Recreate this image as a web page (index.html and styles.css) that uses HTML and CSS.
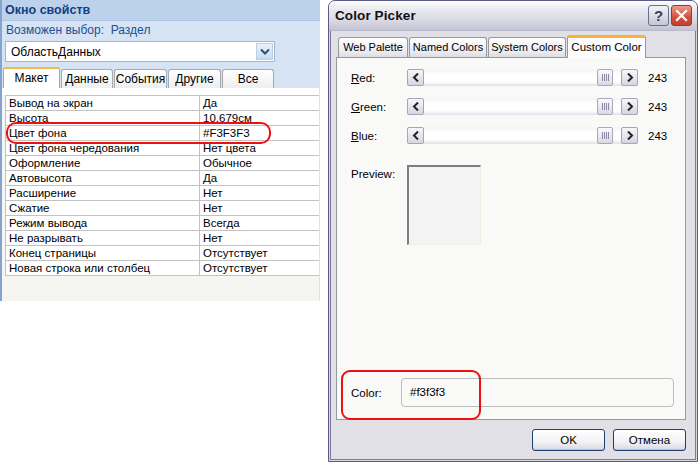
FILE: index.html
```html
<!DOCTYPE html>
<html>
<head>
<meta charset="utf-8">
<link rel="stylesheet" href="styles.css">
</head>
<body>
<div class="page">
  <div class="props">
    <div class="props-title">Окно свойств</div>
    <div class="props-sel">Возможен выбор:&nbsp; Раздел</div>
    <div class="combo">
      <span class="combo-text">ОбластьДанных</span>
      <span class="combo-btn"><svg width="10" height="7" viewBox="0 0 10 7"><path d="M1 1.5 L5 5.5 L9 1.5" fill="none" stroke="#2d4f80" stroke-width="2"/></svg></span>
    </div>
    <div class="ptabs">
      <div class="ptab active">Макет</div>
      <div class="ptab w51">Данные</div>
      <div class="ptab w53">События</div>
      <div class="ptab w53">Другие</div>
      <div class="ptab w51">Все</div>
    </div>
    <div class="grid-area">
      <div class="grid">
        <div class="row"><span class="k">Вывод на экран</span><span class="v">Да</span></div>
        <div class="row"><span class="k">Высота</span><span class="v">10,679см</span></div>
        <div class="row"><span class="k">Цвет фона</span><span class="v">#F3F3F3</span></div>
        <div class="row"><span class="k">Цвет фона чередования</span><span class="v">Нет цвета</span></div>
        <div class="row"><span class="k">Оформление</span><span class="v">Обычное</span></div>
        <div class="row"><span class="k">Автовысота</span><span class="v">Да</span></div>
        <div class="row"><span class="k">Расширение</span><span class="v">Нет</span></div>
        <div class="row"><span class="k">Сжатие</span><span class="v">Нет</span></div>
        <div class="row"><span class="k">Режим вывода</span><span class="v">Всегда</span></div>
        <div class="row"><span class="k">Не разрывать</span><span class="v">Нет</span></div>
        <div class="row"><span class="k">Конец страницы</span><span class="v">Отсутствует</span></div>
        <div class="row"><span class="k">Новая строка или столбец</span><span class="v">Отсутствует</span></div>
      </div>
      <div class="hl hl-left"></div>
    </div>
  </div>

  <div class="dialog">
    <div class="titlebar">
      <span class="title">Color Picker</span>
      <span class="tb-btns">
        <span class="tbtn help">?</span>
        <span class="tbtn close"><svg width="13" height="13" viewBox="0 0 13 13"><path d="M2 2 L11 11 M11 2 L2 11" stroke="#fff" stroke-width="2.2" stroke-linecap="square"/></svg></span>
      </span>
    </div>
    <div class="dbody">
      <div class="tabs">
        <div class="tab t1">Web Palette</div>
        <div class="tab t2">Named Colors</div>
        <div class="tab t3">System Colors</div>
        <div class="tab t4 active">Custom Color</div>
      </div>
      <div class="panel">
        <div class="sliders">
          <div class="srow">
            <span class="slabel"><u>R</u>ed:</span>
            <div class="track">
              <span class="sbtn"><svg width="8" height="9" viewBox="0 0 8 9"><path d="M6 0.5 L2 4.5 L6 8.5" fill="none" stroke="#222" stroke-width="2"/></svg></span>
              <span class="trackfill"></span>
              <span class="thumb"><i></i><i></i><i></i><i></i></span>
              <span class="gap"></span>
              <span class="sbtn"><svg width="8" height="9" viewBox="0 0 8 9"><path d="M2 0.5 L6 4.5 L2 8.5" fill="none" stroke="#222" stroke-width="2"/></svg></span>
            </div>
            <span class="sval">243</span>
          </div>
          <div class="srow">
            <span class="slabel"><u>G</u>reen:</span>
            <div class="track">
              <span class="sbtn"><svg width="8" height="9" viewBox="0 0 8 9"><path d="M6 0.5 L2 4.5 L6 8.5" fill="none" stroke="#222" stroke-width="2"/></svg></span>
              <span class="trackfill"></span>
              <span class="thumb"><i></i><i></i><i></i><i></i></span>
              <span class="gap"></span>
              <span class="sbtn"><svg width="8" height="9" viewBox="0 0 8 9"><path d="M2 0.5 L6 4.5 L2 8.5" fill="none" stroke="#222" stroke-width="2"/></svg></span>
            </div>
            <span class="sval">243</span>
          </div>
          <div class="srow">
            <span class="slabel"><u>B</u>lue:</span>
            <div class="track">
              <span class="sbtn"><svg width="8" height="9" viewBox="0 0 8 9"><path d="M6 0.5 L2 4.5 L6 8.5" fill="none" stroke="#222" stroke-width="2"/></svg></span>
              <span class="trackfill"></span>
              <span class="thumb"><i></i><i></i><i></i><i></i></span>
              <span class="gap"></span>
              <span class="sbtn"><svg width="8" height="9" viewBox="0 0 8 9"><path d="M2 0.5 L6 4.5 L2 8.5" fill="none" stroke="#222" stroke-width="2"/></svg></span>
            </div>
            <span class="sval">243</span>
          </div>
        </div>
        <div class="preview-row">
          <span class="slabel">Preview:</span>
          <div class="preview"></div>
        </div>
        <div class="spacer"></div>
        <div class="color-row">
          <span class="clabel">Color:</span>
          <div class="cbox">#f3f3f3</div>
        </div>
        <div class="hl hl-right"></div>
      </div>
      <div class="buttons">
        <span class="btn">OK</span>
        <span class="btn">Отмена</span>
      </div>
    </div>
  </div>
</div>
</body>
</html>
```
FILE: styles.css
```css
* { box-sizing: border-box; }
html, body { margin: 0; padding: 0; background: #fff; }
body { width: 698px; height: 462px; overflow: hidden; }
.page { display: flex; align-items: flex-start; height: 462px; }

/* ---------- Left property sheet ---------- */
.props {
  width: 320px;
  height: 301px;
  margin-right: 8px;
  background: #d5e3f4;
  border-left: 2px solid #86a3cf;
  display: flex;
  flex-direction: column;
  font-family: "Liberation Sans", Arial, sans-serif;
  font-size: 11.5px;
  color: #000;
}
.props-title {
  height: 21px;
  line-height: 20px;
  padding-left: 3px;
  background: #bcd1ec;
  border-bottom: 1px solid #aec5e4;
  font-weight: bold;
  font-size: 12.5px;
  color: #123f80;
}
.props-sel {
  height: 20px;
  line-height: 16px;
  padding-left: 4px;
  padding-top: 1px;
  color: #1e4f8f;
  font-size: 12px;
}
.combo {
  margin-left: 3px;
  width: 270px;
  height: 21px;
  background: #fff;
  border: 1px solid #9fb5d2;
  display: flex;
  align-items: center;
  justify-content: space-between;
  padding: 1px 1px 1px 5px;
}
.combo-text { font-size: 12px; }
.combo-btn {
  width: 17px;
  height: 17px;
  background: linear-gradient(#eaf2fb, #c9dbf1);
  border: 1px solid #b9cde6;
  display: flex;
  align-items: center;
  justify-content: center;
}
.ptabs {
  display: flex;
  margin-top: 6px;
  padding-left: 1px;
  height: 20px;
  align-items: flex-end;
  gap: 1px;
}
.ptab {
  height: 19px;
  border: 1px solid #a5a9b0;
  border-bottom: none;
  border-radius: 3px 3px 0 0;
  background: linear-gradient(#ffffff, #eeeeee);
  text-align: center;
  line-height: 18px;
  font-size: 12px;
  width: 53px;
}
.ptab.active {
  width: 57px;
  height: 21px;
  background: #fff;
  border-top: 2px solid #f2b84a;
  line-height: 18px;
}
.ptab.w51 { width: 52px; }
.ptab.w53 { width: 53px; }
.grid-area {
  flex: 1;
  background: #f5f5f1;
  margin-right: 1px;
  padding-top: 6px;
  padding-left: 3px;
  position: relative;
  border-top: 1px solid #fff;
}
.grid-area::before {
  content: "";
  position: absolute;
  left: 0; right: 0; top: 0; height: 6px;
  background: #fff;
}
.grid {
  background: #fff;
  border-top: 1px solid #c2c2c2;
  border-left: 1px solid #c2c2c2;
}
.row {
  display: flex;
  height: 15px;
  border-bottom: 1px solid #c2c2c2;
  line-height: 14px;
}
.row .k {
  width: 194px;
  padding-left: 3px;
  border-right: 1px solid #c2c2c2;
  white-space: nowrap;
  overflow: hidden;
}
.row .v { padding-left: 3px; white-space: nowrap; }

.hl {
  position: absolute;
  border: 2px solid #ee1010;
  border-radius: 10px;
  pointer-events: none;
}
.hl-left { left: 4px; top: 33px; width: 265px; height: 22px; }

/* ---------- Right dialog ---------- */
.dialog {
  width: 370px;
  height: 462px;
  border: 1px solid #5a5a84;
  border-radius: 7px 7px 0 0;
  box-shadow: inset 0 0 0 1px #d6d6e0, inset 0 0 0 2px #7b7b9c;
  background: #e1e0e6;
  display: flex;
  flex-direction: column;
  font-family: "Liberation Sans", Arial, sans-serif;
  font-size: 11px;
  color: #000;
}
.titlebar {
  height: 30px;
  border-radius: 6px 6px 0 0;
  background: linear-gradient(#fdfdfe 0%, #e9e9f0 30%, #d7d7e2 70%, #c3c3d1 100%);
  display: flex;
  align-items: center;
  justify-content: space-between;
  padding: 0 5px 0 6px;
  border-bottom: 1px solid #b9b9c9;
}
.title { font-weight: bold; font-size: 13.5px; color: #111; letter-spacing: 0.1px; }
.tb-btns { display: flex; gap: 2px; }
.tbtn {
  width: 21px;
  height: 21px;
  border-radius: 3px;
  display: flex;
  align-items: center;
  justify-content: center;
}
.help {
  border: 1px solid #6d6d8f;
  background: linear-gradient(#f3f3f8, #c6c6d8);
  color: #3c3c5c;
  font-weight: bold;
  font-size: 15px;
}
.close {
  border: 1px solid #8c3f3a;
  background: linear-gradient(#ec9c8c, #d0503e 60%, #c2402f);
}
.dbody {
  flex: 1;
  padding: 3px 11px 0 7px;
  display: flex;
  flex-direction: column;
}
.tabs {
  display: flex;
  height: 23px;
  align-items: flex-end;
  padding-left: 2px;
  position: relative;
  z-index: 1;
}
.tab {
  height: 20px;
  border: 1px solid #919b9c;
  border-bottom: none;
  border-radius: 3px 3px 0 0;
  background: linear-gradient(#ffffff, #ececf0 70%, #dcdce4);
  text-align: center;
  line-height: 19px;
  margin-right: 1px;
  font-size: 11px;
}
.t1 { width: 70px; }
.t2 { width: 78px; }
.t3 { width: 78px; }
.t4 { width: 79px; }
.tab.active {
  height: 23px;
  background: #fcfcfe;
  border-top: 3px solid #f8b238;
  line-height: 18px;
  margin-bottom: -1px;
  font-size: 11.5px;
}
.panel {
  height: 363px;
  border: 1px solid #919b9c;
  background: #f9f9f8;
  position: relative;
  display: flex;
  flex-direction: column;
  padding: 11px 0 12px 14px;
}
.sliders { display: flex; flex-direction: column; gap: 12px; }
.srow { display: flex; align-items: center; height: 17px; }
.slabel { width: 56px; font-size: 11.5px; }
.track {
  width: 231px;
  height: 17px;
  display: flex;
  align-items: center;
  background: linear-gradient(#f4f4f6, #ffffff 40%, #ffffff 80%, #e8e8ec);
  border-bottom: 1px solid #e4e4ea;
}
.sbtn {
  width: 17px;
  height: 17px;
  border: 1px solid #a5a5b8;
  border-radius: 2px;
  background: linear-gradient(#f6f6fa, #d6d6e2);
  display: flex;
  align-items: center;
  justify-content: center;
}
.trackfill { width: 173px; }
.thumb {
  width: 16px;
  height: 17px;
  border: 1px solid #a8a8bc;
  border-radius: 2px;
  background: linear-gradient(#fbfbfd, #d9d9e4);
  display: flex;
  align-items: center;
  justify-content: center;
  gap: 1px;
}
.thumb i { width: 1px; height: 7px; background: #8a8aa2; }
.gap { width: 8px; }
.sval { margin-left: 10px; font-size: 11.5px; }
.preview-row { display: flex; margin-top: 21px; }
.preview-row .slabel { padding-top: 3px; }
.preview {
  width: 74px;
  height: 80px;
  background: #f3f3f3;
  border-top: 2px solid #7d7d7d;
  border-left: 2px solid #7d7d7d;
  border-right: 1px solid #f1efe2;
  border-bottom: 1px solid #f1efe2;
}
.spacer { flex: 1; }
.color-row { display: flex; align-items: center; }
.clabel { width: 50px; font-size: 11.5px; }
.cbox {
  width: 273px;
  height: 29px;
  border: 1px solid #bdbdbd;
  border-radius: 4px;
  padding-left: 8px;
  line-height: 26px;
  font-size: 11.5px;
}
.hl-right { left: 4px; top: 312px; width: 140px; height: 50px; border-radius: 9px; }
.buttons {
  display: flex;
  justify-content: flex-end;
  gap: 8px;
  margin-top: 9px;
}
.btn {
  width: 73px;
  height: 22px;
  border: 1px solid #1d3f70;
  border-radius: 3px;
  background: linear-gradient(#ffffff, #f2f2f5 60%, #d8d8e2);
  box-shadow: inset 0 -1px 0 #c0c0d0;
  text-align: center;
  line-height: 20px;
  font-size: 11.5px;
}
```
